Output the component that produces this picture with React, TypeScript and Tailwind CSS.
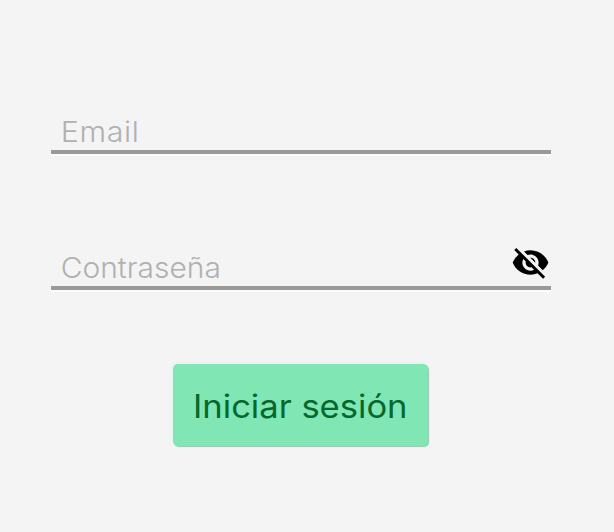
import { useState } from "react";
import { MdVisibilityOff } from "react-icons/md";

export default function App() {
  const [email, setEmail] = useState("");
  const [password, setPassword] = useState("");
  return (
    <main className="h-[532px] w-[614px] bg-[#f4f4f4] pt-[108px] pl-[51px] font-['Inter',sans-serif]">
      <form className="w-[500px]" onSubmit={(e) => e.preventDefault()}>
        <div className="h-[46px] border-b-4 border-[#999999] shadow-[0_2px_0_#fcfcfc]">
          <input
            aria-label="Email"
            placeholder="Email"
            value={email}
            onChange={(e) => setEmail(e.target.value)}
            className="h-[47px] w-[460px] origin-left scale-x-[1.09] bg-transparent pl-[9px] text-[28px] font-light tracking-[0.5px] outline-none placeholder:text-[#b0b0b0]"
          />
        </div>
        <div className="mt-[90px] flex h-[46px] justify-between border-b-4 border-[#999999] shadow-[0_2px_0_#fcfcfc]">
          <input
            aria-label="Contraseña"
            type="text"
            placeholder="Contraseña"
            value={password}
            onChange={(e) => setPassword(e.target.value)}
            className="h-[47px] w-[400px] origin-left scale-x-[1.07] bg-transparent pl-[9px] text-[28px] font-light outline-none placeholder:text-[#b0b0b0]"
          />
          <MdVisibilityOff className="-mt-px mr-px size-[39px] shrink-0 text-black" />
        </div>
        <button className="mt-[74px] ml-[122px] flex h-[82px] w-[255px] items-center justify-center rounded-[5px] bg-[#80e7b4] pt-[3px] text-[32px] whitespace-nowrap text-[#04682f] shadow-[1px_1px_1px_#a8bdb2,-1px_-1px_2px_#c9ffe5]">
          <span className="scale-x-[1.08]">Iniciar sesión</span>
        </button>
      </form>
    </main>
  );
}
